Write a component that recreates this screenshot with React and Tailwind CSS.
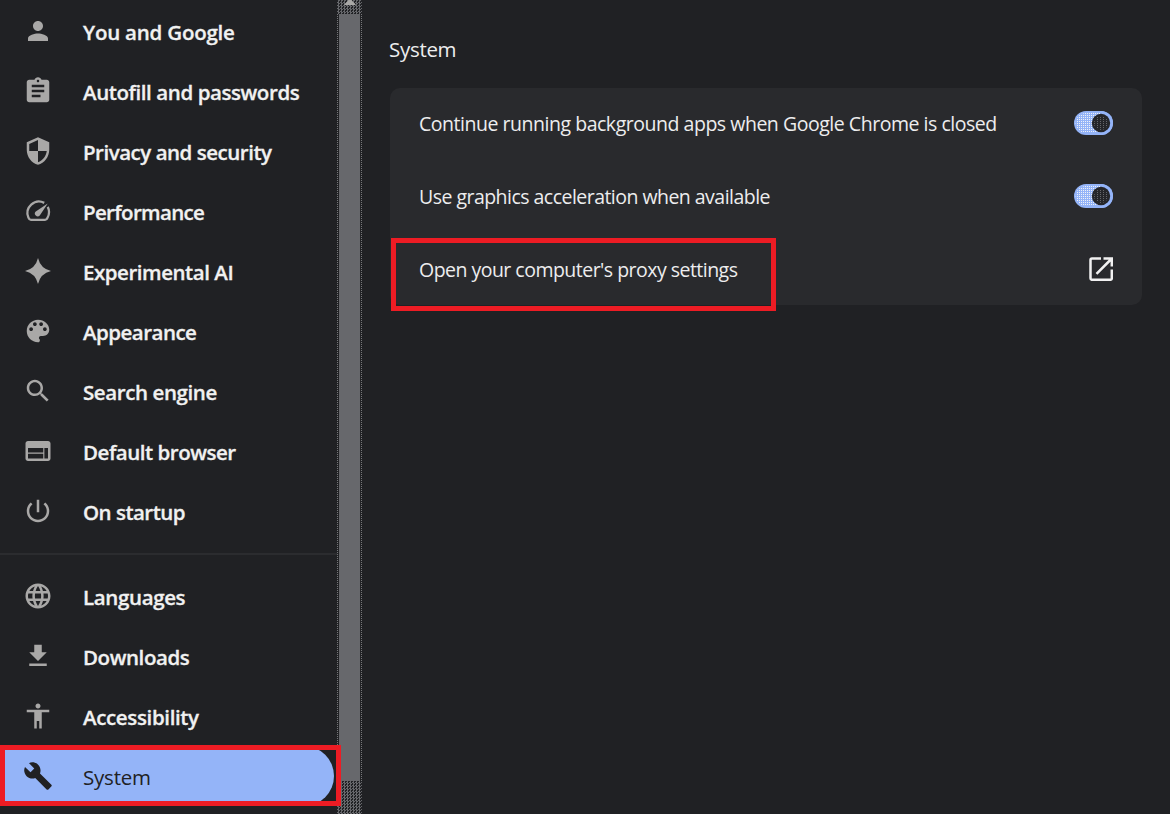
import React from "react";

const paths = {
  person: "M12 12c2.21 0 4-1.79 4-4s-1.79-4-4-4-4 1.79-4 4 1.79 4 4 4zm0 2c-2.67 0-8 1.34-8 4v2h16v-2c0-2.66-5.33-4-8-4z",
  assignment: "M19 3h-4.18C14.4 1.84 13.3 1 12 1c-1.3 0-2.4.84-2.82 2H5c-1.1 0-2 .9-2 2v14c0 1.1.9 2 2 2h14c1.1 0 2-.9 2-2V5c0-1.1-.9-2-2-2zm-7 0c.55 0 1 .45 1 1s-.45 1-1 1-1-.45-1-1 .45-1 1-1zm2 14H7v-2h7v2zm3-4H7v-2h10v2zm0-4H7V7h10v2z",
  security: "M12 1L3 5v6c0 5.55 3.84 10.74 9 12 5.16-1.26 9-6.45 9-12V5l-9-4zm0 10.99h7c-.53 4.12-3.28 7.79-7 8.94V12H5V6.3l7-3.11v8.8z",
  spark: "M12 1.6Q14 10 22.400 12Q14 14 12 22.400Q10 14 1.600 12Q10 10 12 1.600z",
  palette: "M12 3c-4.970 0-9 4.030-9 9s4.030 9 9 9c.83 0 1.500-.67 1.500-1.500 0-.39-.15-.74-.39-1.010-.23-.26-.38-.61-.38-.99 0-.83.67-1.500 1.500-1.500H16c2.760 0 5-2.240 5-5 0-4.420-4.030-8-9-8zm-5.500 9c-.83 0-1.500-.67-1.500-1.500S5.670 9 6.500 9 8 9.670 8 10.500 7.330 12 6.500 12zm3-4C8.670 8 8 7.330 8 6.500S8.670 5 9.500 5s1.500.67 1.500 1.500S10.330 8 9.500 8zm5 0c-.83 0-1.500-.67-1.500-1.500S13.670 5 14.500 5s1.500.67 1.500 1.500S15.330 8 14.500 8zm3 4c-.83 0-1.500-.67-1.500-1.500S16.670 9 17.500 9s1.500.67 1.500 1.500-.67 1.500-1.500 1.500z",
  search: "M15.500 14h-.79l-.28-.27C15.410 12.590 16 11.110 16 9.500 16 5.910 13.090 3 9.500 3S3 5.910 3 9.500 5.910 16 9.500 16c1.610 0 3.090-.59 4.230-1.570l.27.28v.79l5 4.990L20.490 19l-4.990-5zm-6 0C7.010 14 5 11.990 5 9.500S7.010 5 9.500 5 14 7.010 14 9.500 11.990 14 9.500 14z",
  web: "M20 4H4c-1.100 0-1.990.9-1.990 2L2 18c0 1.100.9 2 2 2h16c1.100 0 2-.9 2-2V6c0-1.100-.9-2-2-2zM16.200 18H4v-3.800h12.200zm0-4.800H4V9.500h12.200zM20 18h-2.900V9.500H20z",
  power: "M13 3h-2v10h2V3zm4.830 2.170l-1.420 1.420C17.990 7.860 19 9.810 19 12c0 3.870-3.130 7-7 7s-7-3.130-7-7c0-2.190 1.010-4.140 2.580-5.420L6.170 5.170C4.230 6.820 3 9.260 3 12c0 4.970 4.030 9 9 9s9-4.030 9-9c0-2.740-1.230-5.180-3.170-6.830z",
  language: "M11.990 2C6.470 2 2 6.480 2 12s4.470 10 9.990 10C17.520 22 22 17.520 22 12S17.520 2 11.990 2zm6.930 6h-2.950c-.32-1.250-.78-2.450-1.380-3.560 1.840.63 3.370 1.910 4.330 3.560zM12 4.040c.83 1.200 1.480 2.530 1.910 3.960h-3.820c.43-1.430 1.080-2.760 1.910-3.960zM4.260 14C4.100 13.360 4 12.690 4 12s.1-1.360.26-2h3.380c-.08.66-.14 1.320-.14 2 0 .68.06 1.340.14 2H4.260zm.82 2h2.950c.32 1.250.78 2.450 1.380 3.560-1.840-.63-3.370-1.900-4.330-3.560zm2.950-8H5.080c.96-1.660 2.490-2.930 4.330-3.560C8.810 5.550 8.350 6.750 8.030 8zM12 19.960c-.83-1.200-1.480-2.530-1.910-3.960h3.820c-.43 1.430-1.080 2.760-1.910 3.960zM14.340 14H9.660c-.09-.66-.16-1.320-.16-2 0-.68.07-1.350.16-2h4.680c.09.65.16 1.320.16 2 0 .68-.07 1.340-.16 2zm.25 5.560c.6-1.110 1.060-2.310 1.380-3.560h2.950c-.96 1.650-2.490 2.930-4.330 3.560zM16.360 14c.08-.66.14-1.320.14-2 0-.68-.06-1.340-.14-2h3.380c.16.64.26 1.310.26 2s-.1 1.360-.26 2h-3.380z",
  download: "M19 9h-4V3H9v6H5l7 7 7-7zM5 18v2h14v-2H5z",
  accessibility: "M12 2c1.100 0 2 .9 2 2s-.9 2-2 2-2-.9-2-2 .9-2 2-2zm9 7h-6v13h-2v-6h-2v6H9V9H3V7h18v2z",
  build: "M22.700 19l-9.100-9.100c.9-2.300.4-5-1.500-6.900-2-2-5-2.400-7.400-1.300L9 6 6 9 1.600 4.700C.4 7.100.9 10.100 2.900 12.100c1.900 1.900 4.600 2.400 6.900 1.500l9.100 9.100c.4.4 1 .4 1.400 0l2.300-2.300c.5-.4.5-1.100.1-1.400z",
};

function Icon({ name }) {
  if (name === "speed") {
    return (
      <svg viewBox="0 0 24 24" className="size-[30px] shrink-0" fill="none" stroke="currentColor" strokeWidth="1.8">
        <path d="M17 5.500A9.200 9.200 0 0 0 4.300 17.200Q5 19 6.300 19H17.700Q19 19 19.700 17.200A9.200 9.200 0 0 0 19.800 8.700" />
        <path d="M19.800 5.900L10.200 12.300A2.200 2.200 0 1 0 13.400 15.500Z" fill="currentColor" stroke="none" />
      </svg>
    );
  }
  return (
    <svg viewBox="0 0 24 24" className="size-[30px] shrink-0" fill="currentColor">
      <path d={paths[name]} />
    </svg>
  );
}

const primary = [
  ["person", "You and Google", "tracking-[-0.22px]"],
  ["assignment", "Autofill and passwords", "tracking-[-0.42px]"],
  ["security", "Privacy and security", "tracking-[-0.48px]"],
  ["speed", "Performance", "tracking-[-0.66px]"],
  ["spark", "Experimental AI", "tracking-[-0.46px]"],
  ["palette", "Appearance", "tracking-[-0.52px]"],
  ["search", "Search engine", "tracking-[-0.4px]"],
  ["web", "Default browser", "tracking-[-0.48px]"],
  ["power", "On startup", "tracking-[-0.52px]"],
];

const secondary = [
  ["language", "Languages", "tracking-[-0.36px]"],
  ["download", "Downloads", "tracking-[-0.42px]"],
  ["accessibility", "Accessibility", "tracking-[-0.36px]"],
];

function NavItem({ icon, label, tracking }) {
  return (
    <a className="flex h-[60px] items-center gap-[30px] pl-[23px] text-[#a9a8a7]">
      <Icon name={icon} />
      <span className={"whitespace-nowrap pt-px text-[20.5px] leading-7 font-semibold text-[#f1f1f1] [-webkit-text-stroke:0.3px_#f1f1f1] " + tracking}>{label}</span>
    </a>
  );
}

function Toggle({ id }) {
  return (
    <svg className="h-6 w-10 shrink-0" viewBox="0 0 40 24" role="switch" aria-checked="true">
      <defs>
        <pattern id={id + "-track"} width="2" height="2" patternUnits="userSpaceOnUse">
          <rect width="1" height="1" fill="#eef1f8" shapeRendering="crispEdges" />
        </pattern>
        <pattern id={id + "-knob"} width="3" height="2" patternUnits="userSpaceOnUse">
          <rect width="1" height="1" fill="#66676b" shapeRendering="crispEdges" />
        </pattern>
      </defs>
      <rect x="1" y="0" width="39" height="24" rx="12" fill="#94b4f8" />
      <path d="M12.500 2H32V22H12.500A10 10 0 0 1 12.500 2Z" fill={`url(#${id}-track)`} />
      <path d="M28 0A12 12 0 0 1 28 24Z" fill="#94b4f8" />
      <circle cx="28" cy="12" r="9.200" fill="#25262a" />
      <circle cx="28" cy="12" r="7" fill={`url(#${id}-knob)`} />
    </svg>
  );
}

function OpenInNew() {
  return (
    <svg className="size-6 shrink-0" viewBox="0 0 24 24" fill="none" stroke="#f1f1f1" strokeWidth="2.500">
      <path d="M12 1.500H3Q1.500 1.500 1.500 3V21.300Q1.500 22.800 3 22.800H21.300Q22.800 22.800 22.800 21.300V12.500" />
      <path d="M14.500 1.500H22.800V9.500M22.300 2L7.500 16.800" />
    </svg>
  );
}

function Row({ label, tracking, children }) {
  return (
    <div className="flex h-[73px] items-center justify-between pr-[29px] pb-[3px] pl-[29px] text-[#ededee]">
      <span className={"whitespace-nowrap pt-[2px] text-[19.5px] leading-7 " + tracking}>{label}</span>
      {children}
    </div>
  );
}

export default function App() {
  return (
    <div className="relative flex h-[814px] w-[1170px] overflow-hidden bg-[#202124] font-['Open_Sans','Noto_Sans',sans-serif]">
      <nav className="flex w-[337px] shrink-0 flex-col pt-px">
        {primary.map(([icon, label, tracking]) => (
          <NavItem key={label} icon={icon} label={label} tracking={tracking} />
        ))}
        <div className="mt-3 mb-[11px] h-0.5 shrink-0 bg-[#2b2c2f]" />
        {secondary.map(([icon, label, tracking]) => (
          <NavItem key={label} icon={icon} label={label} tracking={tracking} />
        ))}
        <a className="flex h-[60px] w-[334px] items-center gap-[30px] rounded-r-full bg-[#94b4f8] pl-[23px] text-[#202124]">
          <Icon name="build" />
          <span className="pt-px text-[20.5px] leading-7 tracking-[-0.2px]">System</span>
        </a>
      </nav>

      <div className="flex w-[25px] shrink-0 flex-col bg-[#202124] bg-[repeating-conic-gradient(#66676b_0_25%,#202124_0_50%)] bg-[length:3px_3px]">
        <div className="flex h-[14px] shrink-0 justify-center">
          <svg className="h-[5px] w-3" viewBox="0 0 12 5" fill="#a9a8a7">
            <path d="M4.500 0H7.500L12 5H0Z" />
          </svg>
        </div>
        <div className="h-[767px] shrink-0 border-x border-dotted border-[#77787b] bg-[#202124] px-px">
          <div className="h-full bg-[#67686c]" />
        </div>
      </div>

      <main className="flex flex-1 flex-col pt-[35px] pr-[28px] pl-[28px]">
        <h1 className="-ml-px text-[20.5px] leading-7 tracking-[-0.3px] text-[#ededee]">System</h1>
        <section className="mt-[25px] h-[217px] rounded-[10px] bg-[#292a2d]">
          <Row label="Continue running background apps when Google Chrome is closed" tracking="tracking-[-0.47px]">
            <Toggle id="background" />
          </Row>
          <Row label="Use graphics acceleration when available" tracking="tracking-[-0.53px]">
            <Toggle id="graphics" />
          </Row>
          <Row label="Open your computer's proxy settings" tracking="tracking-[-0.52px]">
            <OpenInNew />
          </Row>
        </section>
      </main>

      <div className="absolute top-[745px] left-0 h-[61px] w-[341px] border-5 border-[#ed1c24]" />
      <div className="absolute top-[238px] left-[391px] h-[73px] w-[385px] border-5 border-[#ed1c24]" />
    </div>
  );
}
